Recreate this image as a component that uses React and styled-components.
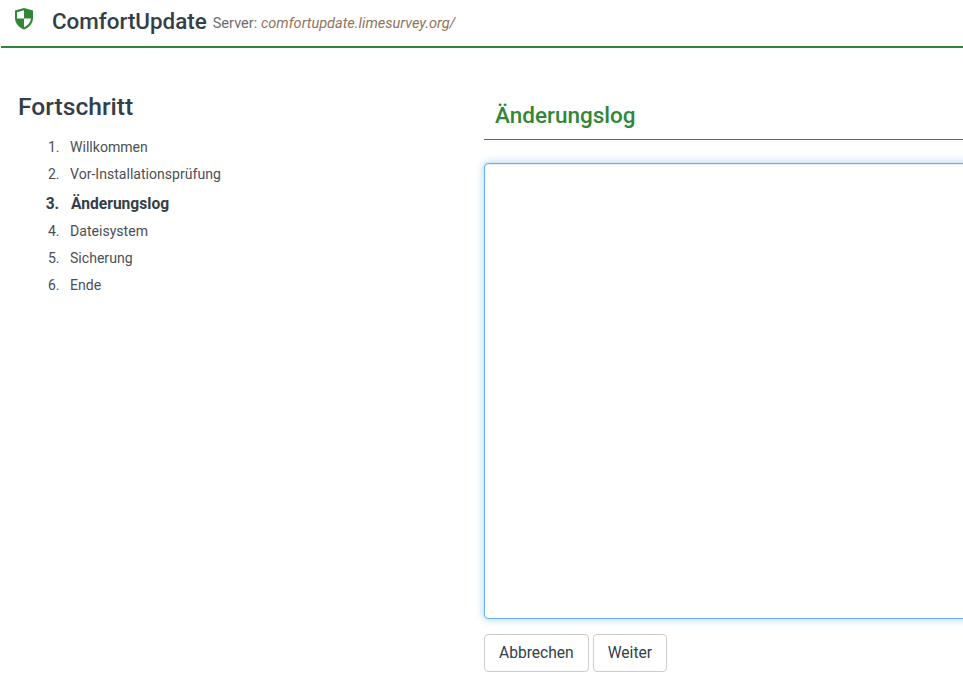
import React from 'react';
import styled, { createGlobalStyle } from 'styled-components';

const Global = createGlobalStyle`
  html, body { margin: 0; padding: 0; background: #fff; overflow: hidden; height: 682px; }
  body { font-family: Roboto, "Liberation Sans", sans-serif; color: #333; }
`;
const Page = styled.div`width: 963px; height: 682px; overflow: hidden;`;
const Header = styled.header`
  margin-left: 1px; height: 46px; border-bottom: 2px solid #328637;
  display: flex; align-items: flex-start; box-sizing: content-box;
`;
const Shield = styled.svg`width: 20px; height: 23px; margin: 7px 0 0 13px; flex: none;`;
const Title = styled.h1`
  margin: 7px 0 0 18px; font-size: 22.4px; line-height: 28px; font-weight: 500; color: #333e48; white-space: nowrap;
`;
const Server = styled.span`
  margin: 13px 0 0 6px; font-size: 14.56px; line-height: 20px; font-weight: 400; color: #6c6c6c; white-space: nowrap;
`;
const Url = styled.em`color: #8f735c; font-style: italic;`;
const Body = styled.div`display: grid; grid-template-columns: 484px 540px;`;
const Side = styled.aside`padding: 44px 0 0 18px;`;
const SideTitle = styled.h2`margin: 0; font-size: 24.6px; line-height: 29px; font-weight: 500; color: #333e48;`;
const Steps = styled.ol`
  margin: 13px 0 0; padding: 0 0 0 45px; font-size: 14.08px; color: #4a4f57;
`;
const Step = styled.li`
  height: 27px; line-height: 27px; padding-left: 7px;
  ${p => p.$active && `font-weight: 700; font-size: 15.6px; color: #333e48; height: 30px; line-height: 33px; padding-left: 8px;`}
`;
const Main = styled.main`padding-top: 44px;`;
const Heading = styled.div`
  height: 47px; border-bottom: 1px solid #5c6b5d; padding-left: 11px; box-sizing: content-box;
`;
const HeadingText = styled.h3`
  margin: 0; padding-top: 9px; font-size: 22.5px; line-height: 28px; font-weight: 500; color: #328637;
`;
const Log = styled.div`
  box-sizing: border-box; margin-top: 23px; height: 456px; border: 1px solid #66afe9; border-radius: 4px;
  box-shadow: inset 0 1px 1px rgba(0,0,0,.075), 0 0 8px rgba(102,175,233,.6); background: #fff;
`;
const Actions = styled.div`display: flex; gap: 4px; margin-top: 15px;`;
const Button = styled.button`
  height: 38px; padding: 0 14px; font: 400 15.6px Roboto, sans-serif; color: #333e48; background: #fff;
  border: 1px solid #ccc; border-radius: 4px;
`;

const steps = ['Willkommen', 'Vor-Installationsprüfung', 'Änderungslog', 'Dateisystem', 'Sicherung', 'Ende'];

export default function App() {
  return (
    <Page>
      <Global />
      <Header>
        <Shield viewBox="0 0 20 23">
          <path d="M10 1 L19 3.6 V11 C19 16.5 15 20.5 10 22.5 C5 20.5 1 16.5 1 11 V3.6 Z" fill="#328637" />
          <path d="M10 3.2 V11.5 H3 V5.2 Z" fill="#fff" />
          <path d="M10 11.5 H17 C16.6 15.2 13.6 18.6 10 20.2 Z" fill="#fff" />
        </Shield>
        <Title>ComfortUpdate</Title>
        <Server>Server: <Url>comfortupdate.limesurvey.org/</Url></Server>
      </Header>
      <Body>
        <Side>
          <SideTitle>Fortschritt</SideTitle>
          <Steps>
            {steps.map((s, i) => <Step key={s} $active={i === 2}>{s}</Step>)}
          </Steps>
        </Side>
        <Main>
          <Heading><HeadingText>Änderungslog</HeadingText></Heading>
          <Log />
          <Actions>
            <Button>Abbrechen</Button>
            <Button>Weiter</Button>
          </Actions>
        </Main>
      </Body>
    </Page>
  );
}
